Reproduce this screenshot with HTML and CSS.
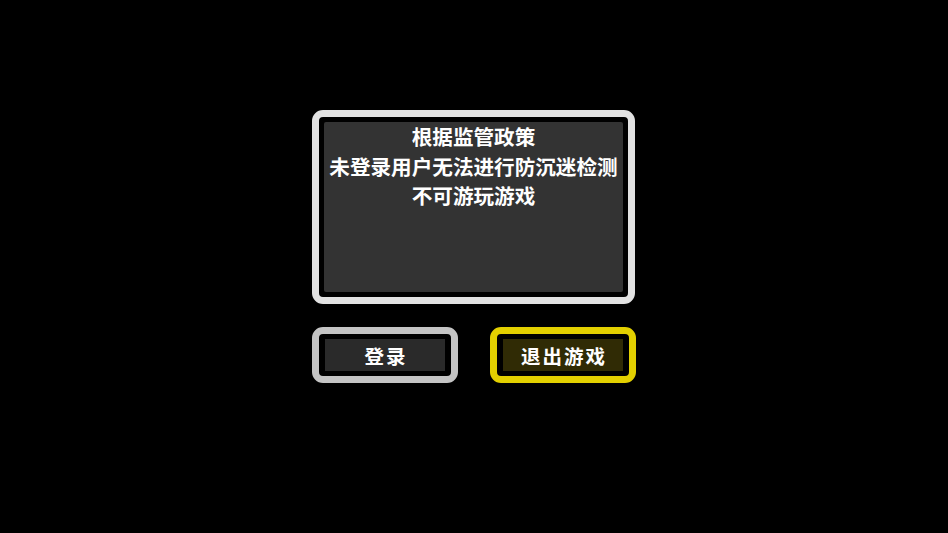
FILE: index.html
```html
<!DOCTYPE html>
<html lang="zh">
<head>
<meta charset="utf-8">
<link rel="stylesheet" href="styles.css">
</head>
<body>
<div class="stage">
  <div class="dialog">
    <div class="panel">
      <div class="panel-inner">
        <p class="line">根据监管政策</p>
        <p class="line">未登录用户无法进行防沉迷检测</p>
        <p class="line">不可游玩游戏</p>
      </div>
    </div>
    <div class="actions">
      <button class="btn btn-login"><span class="btn-inner">登录</span></button>
      <button class="btn btn-exit"><span class="btn-inner">退出游戏</span></button>
    </div>
  </div>
</div>
</body>
</html>
```

FILE: styles.css
```css
* { box-sizing: border-box; }
html, body {
  margin: 0;
  padding: 0;
  background: #000;
  width: 948px;
  height: 533px;
  overflow: hidden;
  font-family: "Noto Sans CJK SC", "Noto Sans", sans-serif;
}
.stage {
  display: flex;
  justify-content: center;
  padding-top: 110px;
}
.dialog {
  display: flex;
  flex-direction: column;
  width: 324px;
}
.panel {
  width: 323px;
  height: 194px;
  border: 7px solid #e2e2e2;
  border-radius: 11px;
  background: #000;
  padding: 5px;
}
.panel-inner {
  height: 100%;
  background: #333333;
  border-radius: 2px;
  text-align: center;
  color: #fff;
  padding-top: 0;
}
.line {
  margin: 0;
  font-size: 20.6px;
  font-weight: 700;
  line-height: 29.5px;
  white-space: nowrap;
}
.actions {
  display: flex;
  gap: 32px;
  margin-top: 23px;
}
.btn {
  width: 146px;
  height: 56px;
  border: 7px solid #c4c4c4;
  border-radius: 11px;
  background: #000;
  padding: 5px 6px;
  margin: 0;
  display: flex;
  font-family: inherit;
}
.btn-inner {
  flex: 1;
  display: flex;
  align-items: center;
  justify-content: center;
  background: #2a2a2a;
  color: #fff;
  font-size: 19.5px;
  font-weight: 700;
  letter-spacing: 2px;
  padding-left: 2px;
}
.btn-exit {
  border-color: #e3d000;
}
.btn-exit .btn-inner {
  background: #302b05;
}
```
